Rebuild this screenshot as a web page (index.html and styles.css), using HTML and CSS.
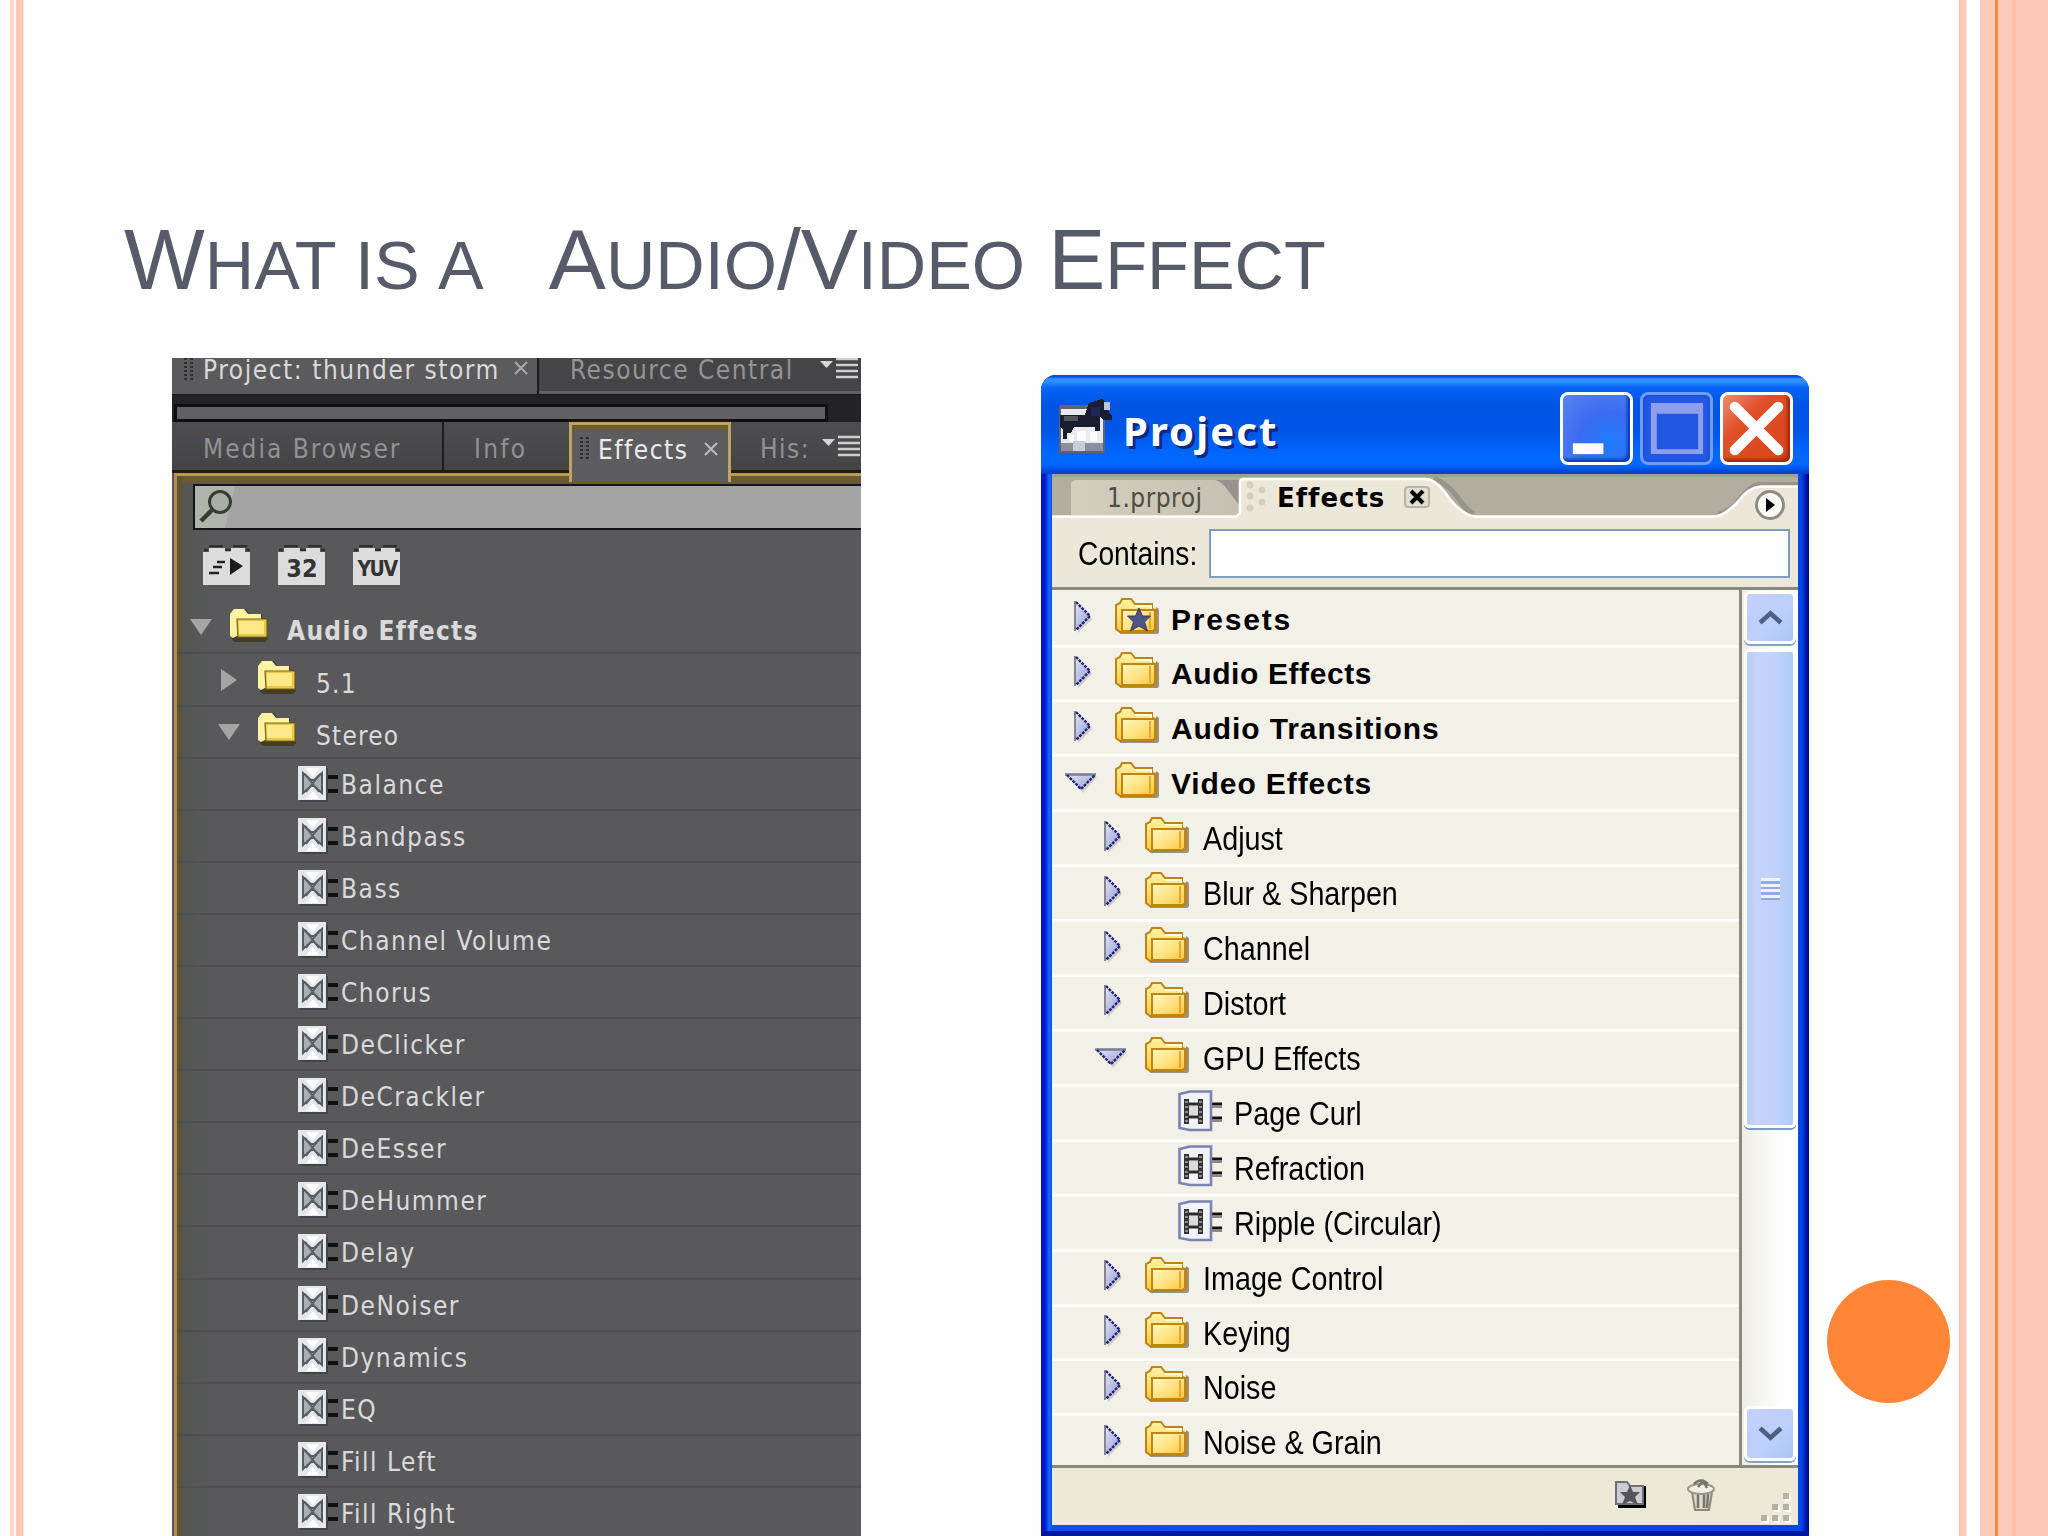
FILE: index.html
```html
<!DOCTYPE html>
<html lang="en">
<head>
<meta charset="utf-8">
<title>What is a Audio/Video Effect</title>
<link rel="stylesheet" href="styles.css">
</head>
<body>
<svg class="defs" aria-hidden="true">
  <defs>
    <linearGradient id="gFolder" x1="0" y1="0" x2="0" y2="1"><stop offset="0" stop-color="#fff3a8"/><stop offset="1" stop-color="#ffc83c"/></linearGradient>
    <linearGradient id="gFront" x1="0" y1="0" x2="1" y2="1"><stop offset="0" stop-color="#fff8c0"/><stop offset=".6" stop-color="#ffdf78"/><stop offset="1" stop-color="#ffc530"/></linearGradient>
    <linearGradient id="gTri" x1="0" y1="0" x2="1" y2="1"><stop offset="0" stop-color="#e4e6f6"/><stop offset="1" stop-color="#8f98d2"/></linearGradient>
    <linearGradient id="gTab" x1="0" y1="0" x2="1" y2="0"><stop offset="0" stop-color="#d2cfbe"/><stop offset="1" stop-color="#c4c1b2"/></linearGradient>
    <symbol id="folder" viewBox="0 0 44 38">
      <path d="M5 37h37q2 0 2-3V12l-3-2v22H5z" fill="#77746c" opacity=".75"/>
      <path d="M1 32V8l4-2 2-4h9l4 5h17v5l4 1v19l-3 3H5z" fill="url(#gFolder)" stroke="#bd8413" stroke-width="2"/>
      <path d="M20 9h16v3" fill="none" stroke="#fffbe0" stroke-width="2"/>
      <path d="M7 33V13h33v19l-2 2H7z" fill="url(#gFront)" stroke="#c08614" stroke-width="2"/>
      <path d="M35 15v17" stroke="#e5a634" stroke-width="2"/>
    </symbol>
    <symbol id="dfolder" viewBox="0 0 40 34">
      <path d="M3 32V5l4-4h10l3 5h13v4h6v21l-3 3H6z" fill="#3c3413" opacity=".75"/>
      <path d="M1 28V6l4-5h10l4 5h13v5l-24 17-4 2z" fill="#fdf3a0"/>
      <path d="M8 11h30v18H9z" fill="#e8c848" stroke="#7c6418" stroke-width="1.200"/>
      <path d="M10 13h25v13H10z" fill="#ffe888"/>
    </symbol>
    <symbol id="right" viewBox="0 0 20 34">
      <path d="M3 5l15 14L4 33z" fill="#8c8c84" opacity=".35"/>
      <path d="M1 2l15 14L1 31z" fill="url(#gTri)"/>
      <path d="M1 1v30" stroke="#85858f" stroke-width="2"/>
      <path d="M2 2l14 14L2 30" fill="none" stroke="#20207c" stroke-width="2.400" stroke-dasharray="2.8 1.2"/>
    </symbol>
    <symbol id="down" viewBox="0 0 32 20">
      <path d="M4 4h28L18 20z" fill="#8c8c84" opacity=".3"/>
      <path d="M1 1h30L16 17z" fill="url(#gTri)"/>
      <path d="M0 1.5h31" stroke="#777b94" stroke-width="2.5"/>
      <path d="M2 2l14 14L30 2" fill="none" stroke="#20207c" stroke-width="2.400" stroke-dasharray="2.8 1.2"/>
    </symbol>
    <symbol id="film" viewBox="0 0 46 42">
      <path d="M33 14h11M33 28h11" stroke="#111" stroke-width="3"/>
      <path d="M33 17h11M33 31h11" stroke="#8a8a8a" stroke-width="2"/>
      <path d="M1.500 4L12 1.500H33V40H12L1.500 38z" fill="#f2f3fa" stroke="#7c82b0" stroke-width="2.600"/>
      <path d="M6 9h5v25H6zM20 9h5v25h-5z" fill="#333"/>
      <path d="M11 14h9M11 27h9" stroke="#2a2a2a" stroke-width="3"/>
      <path d="M11 16h9v9h-9z" fill="#dcdcdc"/>
      <path d="M7 12h3M7 17h3M7 22h3M7 27h3M7 31h3M21 12h3M21 17h3M21 22h3M21 27h3M21 31h3" stroke="#aaa" stroke-width="1.500"/>
    </symbol>
    <symbol id="plug" viewBox="0 0 42 38">
      <path d="M30 12h10M30 26h10" stroke="#101012" stroke-width="4"/>
      <path d="M2 3h28v34H2z" fill="#343a42" opacity=".6"/>
      <path d="M0 1h28v34H0z" fill="#e4e8ea"/>
      <path d="M5 8v20l8-7h3l8 7V8l-8 7h-3z" fill="#a9aeb1" stroke="#555b60" stroke-width="2"/>
      <path d="M7 9l14 18M22 9L8 27" stroke="#5a6065" stroke-width="2"/>
      <path d="M8 3h13l-6 9zM8 34h13l-6-8z" fill="#fff"/>
    </symbol>
    <symbol id="brick" viewBox="0 0 48 40"><path d="M6 3h16v3h6V3h14v4h5v33H0V7h6z" fill="#dcdcdc"/><path d="M6 1h14M30 1h14M1 5h4M43 5h4M22 5h6" stroke="#2f2f2f" stroke-width="2.500"/></symbol>
    <symbol id="menu" viewBox="0 0 38 22"><path d="M0 4h13L6.500 11z" fill="#d5d5d5"/><path d="M16 2h22M16 8h22M16 14h22M16 20h22" stroke="#cfcfcf" stroke-width="2.500"/></symbol>
  </defs>
</svg>

<div class="slide">
  <div class="stripes-left"></div>
  <main class="content">
    <h1 class="title">W<small>HAT&nbsp;IS&nbsp;A&nbsp;</small>&nbsp;&nbsp;A<small>UDIO</small>/V<small>IDEO</small>&nbsp;E<small>FFECT</small></h1>
    <div class="panels">

      <section class="dark">
        <div class="dark-top">
          <div class="dtab dtab-project"><i class="grip"></i><span>Project: thunder storm</span><svg class="x" viewBox="0 0 14 14"><path d="M1 1l12 12M13 1L1 13"/></svg></div>
          <div class="dtab dtab-resource"><span>Resource Central</span><svg class="menu"><use href="#menu"/></svg></div>
        </div>
        <div class="dark-scroll"><i></i></div>
        <div class="dark-tabs">
          <div class="t t-media">Media Browser</div>
          <div class="t t-info">Info</div>
          <div class="t t-effects"><i class="grip"></i><span>Effects</span><svg class="x" viewBox="0 0 14 14"><path d="M1 1l12 12M13 1L1 13"/></svg></div>
          <div class="t t-his"><span>His:</span><svg class="menu"><use href="#menu"/></svg></div>
        </div>
        <div class="dark-body">
          <div class="search"><svg viewBox="0 0 46 42"><path d="M0 0h40L30 42H0z" fill="#b0b4ac"/><circle cx="25" cy="16" r="10.500" fill="#a9aea6" stroke="#363c36" stroke-width="3"/><path d="M18 23L6 35" stroke="#363c36" stroke-width="4.500"/></svg></div>
          <div class="bricks">
            <div class="brick"><svg><use href="#brick"/><path d="M27 13v17l13-9z" fill="#1c1c1c"/><path d="M14 17h8M10 22h9M6 28h10" stroke="#222" stroke-width="2.500"/></svg></div>
            <div class="brick"><svg><use href="#brick"/></svg><b>32</b></div>
            <div class="brick"><svg><use href="#brick"/></svg><b class="yuv">YUV</b></div>
          </div>
          <ul class="dlist">
            <li class="d0"><svg class="tri" viewBox="0 0 22 16"><path d="M0 0h22L11 16z"/></svg><svg class="df"><use href="#dfolder"/></svg><b>Audio Effects</b></li>
            <li class="d1"><svg class="tri tri-r" viewBox="0 0 16 22"><path d="M0 0v22l16-11z"/></svg><svg class="df"><use href="#dfolder"/></svg><span>5.1</span></li>
            <li class="d1"><svg class="tri" viewBox="0 0 22 16"><path d="M0 0h22L11 16z"/></svg><svg class="df"><use href="#dfolder"/></svg><span>Stereo</span></li>
            <li class="d2"><svg><use href="#plug"/></svg><span>Balance</span></li>
            <li class="d2"><svg><use href="#plug"/></svg><span>Bandpass</span></li>
            <li class="d2"><svg><use href="#plug"/></svg><span>Bass</span></li>
            <li class="d2"><svg><use href="#plug"/></svg><span>Channel Volume</span></li>
            <li class="d2"><svg><use href="#plug"/></svg><span>Chorus</span></li>
            <li class="d2"><svg><use href="#plug"/></svg><span>DeClicker</span></li>
            <li class="d2"><svg><use href="#plug"/></svg><span>DeCrackler</span></li>
            <li class="d2"><svg><use href="#plug"/></svg><span>DeEsser</span></li>
            <li class="d2"><svg><use href="#plug"/></svg><span>DeHummer</span></li>
            <li class="d2"><svg><use href="#plug"/></svg><span>Delay</span></li>
            <li class="d2"><svg><use href="#plug"/></svg><span>DeNoiser</span></li>
            <li class="d2"><svg><use href="#plug"/></svg><span>Dynamics</span></li>
            <li class="d2"><svg><use href="#plug"/></svg><span>EQ</span></li>
            <li class="d2"><svg><use href="#plug"/></svg><span>Fill Left</span></li>
            <li class="d2"><svg><use href="#plug"/></svg><span>Fill Right</span></li>
          </ul>
        </div>
      </section>

      <section class="xp">
        <header class="xp-title">
          <svg class="horse" viewBox="0 0 56 56" shape-rendering="crispEdges">
            <path d="M1 6h46v48H1z" fill="#606470"/><path d="M3 10h42v38H3z" fill="#e8eaf0"/>
            <path d="M3 44h42v8H3z" fill="#8b90a0"/><path d="M15 42h12v10H15z" fill="#c9cdd8"/>
            <path d="M2 16h25l4-12 13-4 4 3v6l6 8v4h-8l-4-3v14h-5V28H16l-3 6H9v6H5V30l-3-2z" fill="#1a1d30"/>
            <path d="M6 17h14v5H6z" fill="#55555c"/><path d="M46 3h6v8h-6z" fill="#b9c6d8"/>
            <path d="M19 32h9v10h-9zM32 33h7v9h-7zM11 36h5v6h-5z" fill="#fff"/><path d="M33 8h9v9h-9z" fill="#20285a"/>
          </svg>
          <h2>Project</h2>
          <div class="wbtn min"><svg viewBox="0 0 68 68"><path d="M10 49h31v11H10z" fill="#fff"/></svg></div>
          <div class="wbtn max"><svg viewBox="0 0 68 68"><path fill-rule="evenodd" d="M8 8h53v52H8zM14 19v36h42V19z" fill="#8d9fea"/></svg></div>
          <div class="wbtn close"><svg viewBox="0 0 68 68"><path d="M12 12l44 44M56 12L12 56" stroke="#fff" stroke-width="10.500" stroke-linecap="round"/></svg></div>
        </header>
        <div class="xp-client">
          <div class="xp-tabs">
            <svg class="tabshape" viewBox="0 0 746 48">
              <path d="M0 0h746v44H0z" fill="#b1ae9f"/><path d="M0 0h746v3H0z" fill="#a29f93"/>
              <path d="M160 6h28v35h-2z" fill="#96938a"/>
              <path d="M19 41V9l4-3h140q7 2 12 9l12 16v10z" fill="url(#gTab)"/>
              <path d="M382 4q14 6 24 20 9 13 16 16" fill="none" stroke="#97958a" stroke-width="5"/>
              <path d="M746 10h-40q-8 2-18 14-10 13-22 16" fill="none" stroke="#97958a" stroke-width="4"/>
              <path d="M0 48V42.500H184l4-3V8q0-3 4-3h182q8 0 18 12 16 24 31 25.500h241q10-2 22-15 10-14 23-15h37v36z" fill="#ebe8da"/>
              <path d="M0 42.500H184l4-3V8q0-3 4-3h182q8 0 18 12 16 24 31 25.500h241q10-2 22-15 10-14 23-15h37" fill="none" stroke="#fff" stroke-width="2.600"/>
              <g fill="#d3d0c2"><circle cx="198" cy="11" r="3.500"/><circle cx="198" cy="22" r="3.500"/><circle cx="198" cy="34" r="3.500"/><circle cx="210" cy="16" r="3.500"/><circle cx="210" cy="28" r="3.500"/></g>
              <rect x="353" y="13" width="24" height="20" rx="3" fill="#e2dfd0" stroke="#b9b6a8" stroke-width="2"/>
              <path d="M359 17l12 12M371 17l-12 12" stroke="#000" stroke-width="4"/>
              <circle cx="718" cy="31" r="13.500" fill="#faf9f4" stroke="#8d8c83" stroke-width="3"/>
              <path d="M714 24v14l9-7z" fill="#000"/>
            </svg>
            <span class="prproj">1.prproj</span><span class="eff">Effects</span>
          </div>
          <div class="contains"><label><span class="ms">Contains:</span></label><div class="input"></div></div>
          <div class="xp-main">
            <ul class="xlist">
              <li class="x0"><svg class="r"><use href="#right"/></svg><svg class="f"><use href="#folder"/><path d="M24 11l3.500 8h8l-6 6 3 9-8.500-5-8.500 5 3-9-6-6h8z" fill="#4c5687" stroke="#343c66"/></svg><b class="wide">Presets</b></li>
              <li class="x0"><svg class="r"><use href="#right"/></svg><svg class="f"><use href="#folder"/></svg><b class="tight">Audio Effects</b></li>
              <li class="x0"><svg class="r"><use href="#right"/></svg><svg class="f"><use href="#folder"/></svg><b>Audio Transitions</b></li>
              <li class="x0"><svg class="d"><use href="#down"/></svg><svg class="f"><use href="#folder"/></svg><b>Video Effects</b></li>
              <li class="x1"><svg class="r"><use href="#right"/></svg><svg class="f"><use href="#folder"/></svg><span class="ms">Adjust</span></li>
              <li class="x1"><svg class="r"><use href="#right"/></svg><svg class="f"><use href="#folder"/></svg><span class="ms">Blur &amp; Sharpen</span></li>
              <li class="x1"><svg class="r"><use href="#right"/></svg><svg class="f"><use href="#folder"/></svg><span class="ms">Channel</span></li>
              <li class="x1"><svg class="r"><use href="#right"/></svg><svg class="f"><use href="#folder"/></svg><span class="ms">Distort</span></li>
              <li class="x1"><svg class="d"><use href="#down"/></svg><svg class="f"><use href="#folder"/></svg><span class="ms">GPU Effects</span></li>
              <li class="x2"><svg class="p"><use href="#film"/></svg><span class="ms">Page Curl</span></li>
              <li class="x2"><svg class="p"><use href="#film"/></svg><span class="ms">Refraction</span></li>
              <li class="x2"><svg class="p"><use href="#film"/></svg><span class="ms">Ripple (Circular)</span></li>
              <li class="x1"><svg class="r"><use href="#right"/></svg><svg class="f"><use href="#folder"/></svg><span class="ms">Image Control</span></li>
              <li class="x1"><svg class="r"><use href="#right"/></svg><svg class="f"><use href="#folder"/></svg><span class="ms">Keying</span></li>
              <li class="x1"><svg class="r"><use href="#right"/></svg><svg class="f"><use href="#folder"/></svg><span class="ms">Noise</span></li>
              <li class="x1"><svg class="r"><use href="#right"/></svg><svg class="f"><use href="#folder"/></svg><span class="ms">Noise &amp; Grain</span></li>
            </ul>
            <div class="scroll">
              <div class="sbtn"><svg viewBox="0 0 24 16"><path d="M2 13L12 4l10 9"/></svg></div>
              <div class="thumb"><i></i></div>
              <div class="sbtn sdown"><svg viewBox="0 0 24 16"><path d="M2 3l10 9 10-9"/></svg></div>
            </div>
          </div>
          <footer class="xp-foot">
            <svg class="newbin" viewBox="0 0 32 28"><path d="M3 5h28v22H3z" fill="#000"/><path d="M1 23V1h11l3 4h13v18z" fill="#cdcbd2" stroke="#706e78" stroke-width="2"/><path d="M15 4l3 7h7l-5 5 3 8-8-4-8 4 3-8-5-5h7z" fill="#55535c"/></svg>
            <svg class="trash" viewBox="0 0 30 34"><path d="M6 14l3 18h14l3-18z" fill="#dedbcc" stroke="#8c897c" stroke-width="2"/><path d="M12 16v14M18 16v14M22 16l-1 14" stroke="#77746a" stroke-width="2.500"/><ellipse cx="15" cy="11" rx="13" ry="5" fill="#f3f1e6" stroke="#9b988c" stroke-width="2"/><path d="M8 6q7-7 14 0M12 9l5-6 4 7" fill="none" stroke="#77746a" stroke-width="2.500"/></svg>
            <svg class="sizer" viewBox="0 0 32 32"><g fill="#fff"><path d="M25 3h6v6h-6zM14 14h6v6h-6zM25 14h6v6h-6zM3 25h6v6H3zM14 25h6v6h-6zM25 25h6v6h-6z"/></g><g fill="#b5b2a2"><path d="M23 1h6v6h-6zM12 12h6v6h-6zM23 12h6v6h-6zM1 23h6v6H1zM12 23h6v6h-6zM23 23h6v6h-6z"/></g></svg>
          </footer>
        </div>
      </section>
    </div>
  </main>
  <div class="stripes-right"></div>
  <div class="dot"></div>
</div>
</body>
</html>
```
FILE: styles.css
```css
* { box-sizing: border-box; }
body { margin: 0; background: #fefefe; font-family: "Liberation Sans", Arial, sans-serif; }
ul { list-style: none; margin: 0; padding: 0; }
svg { display: block; flex: none; }
.defs { position: absolute; width: 0; height: 0; }

.slide { position: relative; display: flex; width: 2048px; height: 1536px; overflow: hidden; }
.stripes-left { flex: none; width: 24px; background: linear-gradient(90deg, #fefefe 10px, #fdd8ca 10px 14px, #fff3ee 14px 16px, #fdc9b6 16px 23px, #fee6dc 23px); }
.stripes-right { flex: none; width: 90px; background: linear-gradient(90deg, #fefefe 0 1px, #f9b9a3 1px 2px, #fccab9 2px 8px, #fde4db 8px 9px, #fff 9px 22px, #fccab9 22px 37px, #ff8638 37px 40px, #fccab9 40px 54px, #fcc0aa 54px 58px, #fdc8b6 58px); }
.dot { position: absolute; left: 1827px; top: 1280px; width: 123px; height: 123px; border-radius: 50%; background: #ff8637; }
.content { flex: 1; min-width: 0; display: flex; flex-direction: column; }
.title { margin: 0; height: 358px; padding: 211px 0 0 100px; font-weight: 400; font-size: 85.6px; line-height: 98px; word-spacing: -.5px; color: #575a69; white-space: nowrap; }
.title small { font-size: 68.4px; }
.panels { flex: 1; display: flex; align-items: flex-start; padding-left: 148px; gap: 180px; }

/* dark panel */
.dark { width: 689px; height: 1178px; background: #58585a; overflow: hidden; font: 26px/34px "DejaVu Sans Condensed", "DejaVu Sans", sans-serif; font-stretch: condensed; letter-spacing: 1.5px; color: #dadada; }
.dark-top { display: flex; height: 37px; border-bottom: 1px solid #19191b; }
.dtab { display: flex; align-items: flex-start; white-space: nowrap; overflow: hidden; }
.dtab span { margin-top: -5px; }
.dtab-project { width: 367px; padding-left: 12px; background: #5b5b5d; border-right: 2px solid #1b1b1d; letter-spacing: 1.55px; }
.dtab-project .x { margin: 3px 0 0 14px; }
.dtab-resource { flex: 1; padding-left: 31px; background: #454547; border-bottom: 3px solid #626264; color: #949496; letter-spacing: 1.5px; }
.dtab-resource .menu { margin: -1px 0 0 26px; }
.grip { flex: none; width: 9px; height: 24px; margin-right: 10px; background: repeating-linear-gradient(#303032 0 2px, transparent 2px 4px); -webkit-mask: linear-gradient(90deg, #000 3px, transparent 3px 6px, #000 6px); }
.x { width: 14px; height: 14px; fill: none; stroke: #aaa; stroke-width: 2; }
.menu { width: 38px; height: 22px; }
.dark-scroll { height: 27px; padding: 12px 36px 3px 5px; background: #242427; }
.dark-scroll i { display: block; height: 12px; background: #616163; box-shadow: 0 0 0 3px #0f0f11; }
.dark-tabs { display: flex; height: 51px; background: linear-gradient(#4e4e50, #434345); color: #929294; white-space: nowrap; }
.t { line-height: 55px; border-bottom: 3px solid #211a0b; }
.t-media { width: 272px; padding-left: 31px; border-right: 2px solid #1e1e20; letter-spacing: 2px; }
.t-info { width: 125px; padding-left: 30px; letter-spacing: 2.3px; }
.t-effects { display: flex; width: 162px; height: 60px; padding: 0 0 0 8px; align-items: center; background: #5d5d5f; border: 3px solid #bda460; border-bottom: 0; box-shadow: inset 0 5px #6d5b31, 0 -2px #1b1608; color: #ececec; position: relative; line-height: 34px; }
.t-effects span { margin-top: -7px; letter-spacing: 1.5px; }
.t-effects .grip { margin: -10px 9px 0 0; }
.t-effects .x { margin: -10px 0 0 16px; stroke: #bbb; }
.t-his { flex: 1; display: flex; padding-left: 29px; }
.t-his .menu { margin: 13px 0 0 12px; }
.dark-body { border-left: 3px solid #b08d51; box-shadow: inset 5px 0 #5f5237; border-top: 3px solid #b59a58; height: 1100px; padding-top: 8px; margin-left: 2px; background: linear-gradient(#6b5930 7px, transparent 7px), linear-gradient(90deg, #52564f, #59595b 35px); }
.search { height: 46px; margin-left: 16px; border: 2px solid #161618; border-right: 0; background: #a4a4a5; }
.search svg { width: 46px; height: 42px; }
.bricks { display: flex; gap: 27px; padding: 15px 0 0 26px; height: 71px; }
.brick { position: relative; width: 48px; height: 40px; }
.brick svg { width: 48px; height: 40px; }
.brick b { position: absolute; inset: 8px 0 0; text-align: center; color: #333; font-size: 25px; line-height: 32px; letter-spacing: 0; }
.brick .yuv { font-size: 21px; letter-spacing: -1.5px; }
.dlist li { display: flex; align-items: center; height: 52.06px; border-bottom: 2px solid #4f4f51; white-space: nowrap; }
.dlist li:nth-child(-n+2) { height: 53px; }
.tri { width: 22px; height: 16px; fill: #a5a5a5; }
.tri-r { width: 16px; height: 22px; margin: 0 3px; }
.df { width: 40px; height: 34px; margin: -3px 18px 0 17px; }
.d0 { padding-left: 13px; }
.d0 b { margin-top: 8px; letter-spacing: 1.3px; }
.d1 { padding-left: 41px; }
.d1 .df { margin: -6px 19px 0 17px; }
.d1 span { margin-top: 8px; letter-spacing: 1.2px; }
.d2 { padding-left: 121px; }
.d2 svg { width: 42px; height: 38px; margin: -1px 1px 0 0; }
.d2 span { margin-top: 2px; }

/* XP window */
.xp { width: 768px; height: 1161px; margin-top: 17px; padding: 0 11px 11px; border-radius: 15px 15px 0 0; background: linear-gradient(90deg, #0213c0 0, #0019d2 4px, #1868f5 8px, #0a52e8 11px, #0a46e0 756px, #0349e8 760px, #0010a0 766px, #000478 768px); box-shadow: inset 0 -5px #0018a0; display: flex; flex-direction: column; }
.xp-title { display: flex; align-items: flex-start; height: 99px; margin: 0 -11px; padding: 17px 16px 0 17px; border-radius: 15px 15px 0 0; background: linear-gradient(#0a4ee0 0, #0a50e0 2px, #3396ff 4px, #2a8cff 7px, #0763f5 13px, #0054e4 30px, #0055e6 55px, #0066ff 78px, #0068ff 90px, #0048d8 96px, #0040c8 99px); }
.horse { width: 56px; height: 56px; margin-top: 7px; }
.xp-title h2 { flex: 1; margin: 11px 0 0 9px; font: 700 40px/56px "Noto Sans", sans-serif; letter-spacing: 2.1px; color: #fff; text-shadow: 3px 3px #0a2a86; }
.wbtn { width: 73px; height: 73px; border: 3px solid #fff; border-radius: 8px; margin-left: 7px; background: radial-gradient(circle at 70% 70%, #1f7bff, #3a6cf0 45%, #5a82f2 100%); box-shadow: inset -3px -3px 3px #0d3db8; }
.wbtn svg { width: 67px; height: 67px; }
.max { border-color: #6f9cff; background: #2257e4; box-shadow: inset 0 0 3px #0d3db8; }
.close { background: linear-gradient(135deg, #ec8d72, #e05028 35%, #d8421a); box-shadow: inset -3px -3px 3px #a12b0c; }
.xp-client { flex: 1; display: flex; flex-direction: column; background: #ebe8da; min-height: 0; }
.xp-tabs { position: relative; display: flex; height: 44px; }
.tabshape { position: absolute; left: 0; top: 0; width: 746px; height: 48px; }
.prproj, .eff { position: relative; font: 26px/34px "DejaVu Sans Condensed", "DejaVu Sans", sans-serif; font-stretch: condensed; color: #4e4c44; white-space: nowrap; }
.prproj { width: 170px; margin: 7px 0 0 55px; letter-spacing: .5px; }
.eff { font-family: "DejaVu Sans", sans-serif; font-stretch: normal; font-weight: 700; color: #000; margin-top: 7px; letter-spacing: 1px; }
.contains { display: flex; align-items: flex-start; height: 72px; padding: 11px 8px 0 26px; border-bottom: 3px solid #8b897c; }
.contains label { width: 131px; padding-top: 4px; }
.input { flex: 1; height: 49px; border: 2px solid #7f9db9; background: #fff; }
.ms { display: block; font: 34px/40px "Liberation Sans", Arial, sans-serif; color: #000; white-space: nowrap; transform: scaleX(.845); transform-origin: 0 50%; }
.contains .ms { transform: scaleX(.83); }
.xp-main { display: flex; height: 875px; }
.xlist { width: 687px; overflow: hidden; background: #f3f0e8; }
.xlist li { display: flex; align-items: center; height: 54.93px; border-bottom: 3px solid #fefdfb; white-space: nowrap; }
.xlist li:first-child { height: 57.5px; padding-top: 3px; }
.xlist li:last-child { border-bottom-color: transparent; }
.xlist b { margin-top: 2px; font: 700 30px/40px "Liberation Sans", Arial, sans-serif; letter-spacing: .9px; color: #000; }
.xlist .wide { letter-spacing: 1.8px; }
.xlist .tight { letter-spacing: .6px; }
.r { width: 20px; height: 34px; margin: -3px 0 0 22px; }
.d { width: 32px; height: 20px; margin: 0 -3px 0 13px; }
.f { width: 44px; height: 38px; margin: -6px 12px 0 21px; }
.x1 { padding-left: 30px; }
.x1 .f { margin-right: 14px; }
.x2 { padding-left: 126px; }
.p { width: 46px; height: 42px; margin: -4px 10px 0 0; }
.scroll { flex: 1; display: flex; flex-direction: column; padding: 1px 2px 4px 2px; border-left: 3px solid #8b897c; background: linear-gradient(90deg, #eeede5, #fefefe 70%); }
.sbtn { display: flex; align-items: center; justify-content: center; height: 53px; border: 3px solid #fff; border-radius: 6px; background: linear-gradient(135deg, #c4d0fa, #bccffb 60%, #aac6f6); box-shadow: 0 2px #84a4cc; }
.sbtn svg { width: 25px; height: 17px; fill: none; stroke: #4d6185; stroke-width: 4.5; }
.thumb { display: flex; align-items: center; justify-content: center; height: 479px; margin-top: 5px; border: 3px solid #fff; border-radius: 5px; background: linear-gradient(90deg, #b8cdf4, #c6d3fb 20%, #c2d2fc 55%, #b0ccf8); box-shadow: 0 2px #7b9cc4; }
.thumb i { width: 19px; height: 22px; background: repeating-linear-gradient(#eef3ff 0 3px, #8ea6ea 3px 5.5px); }
.sdown { margin-top: auto; height: 55px; }
.xp-foot { display: flex; height: 60px; padding: 13px 6px 0 563px; border-top: 3px solid #8b897c; background: #ece9d8; }
.newbin { width: 32px; height: 28px; }
.trash { width: 30px; height: 34px; margin-left: 39px; margin-top: -3px; }
.sizer { width: 32px; height: 32px; margin: 11px 0 0 auto; }
```
